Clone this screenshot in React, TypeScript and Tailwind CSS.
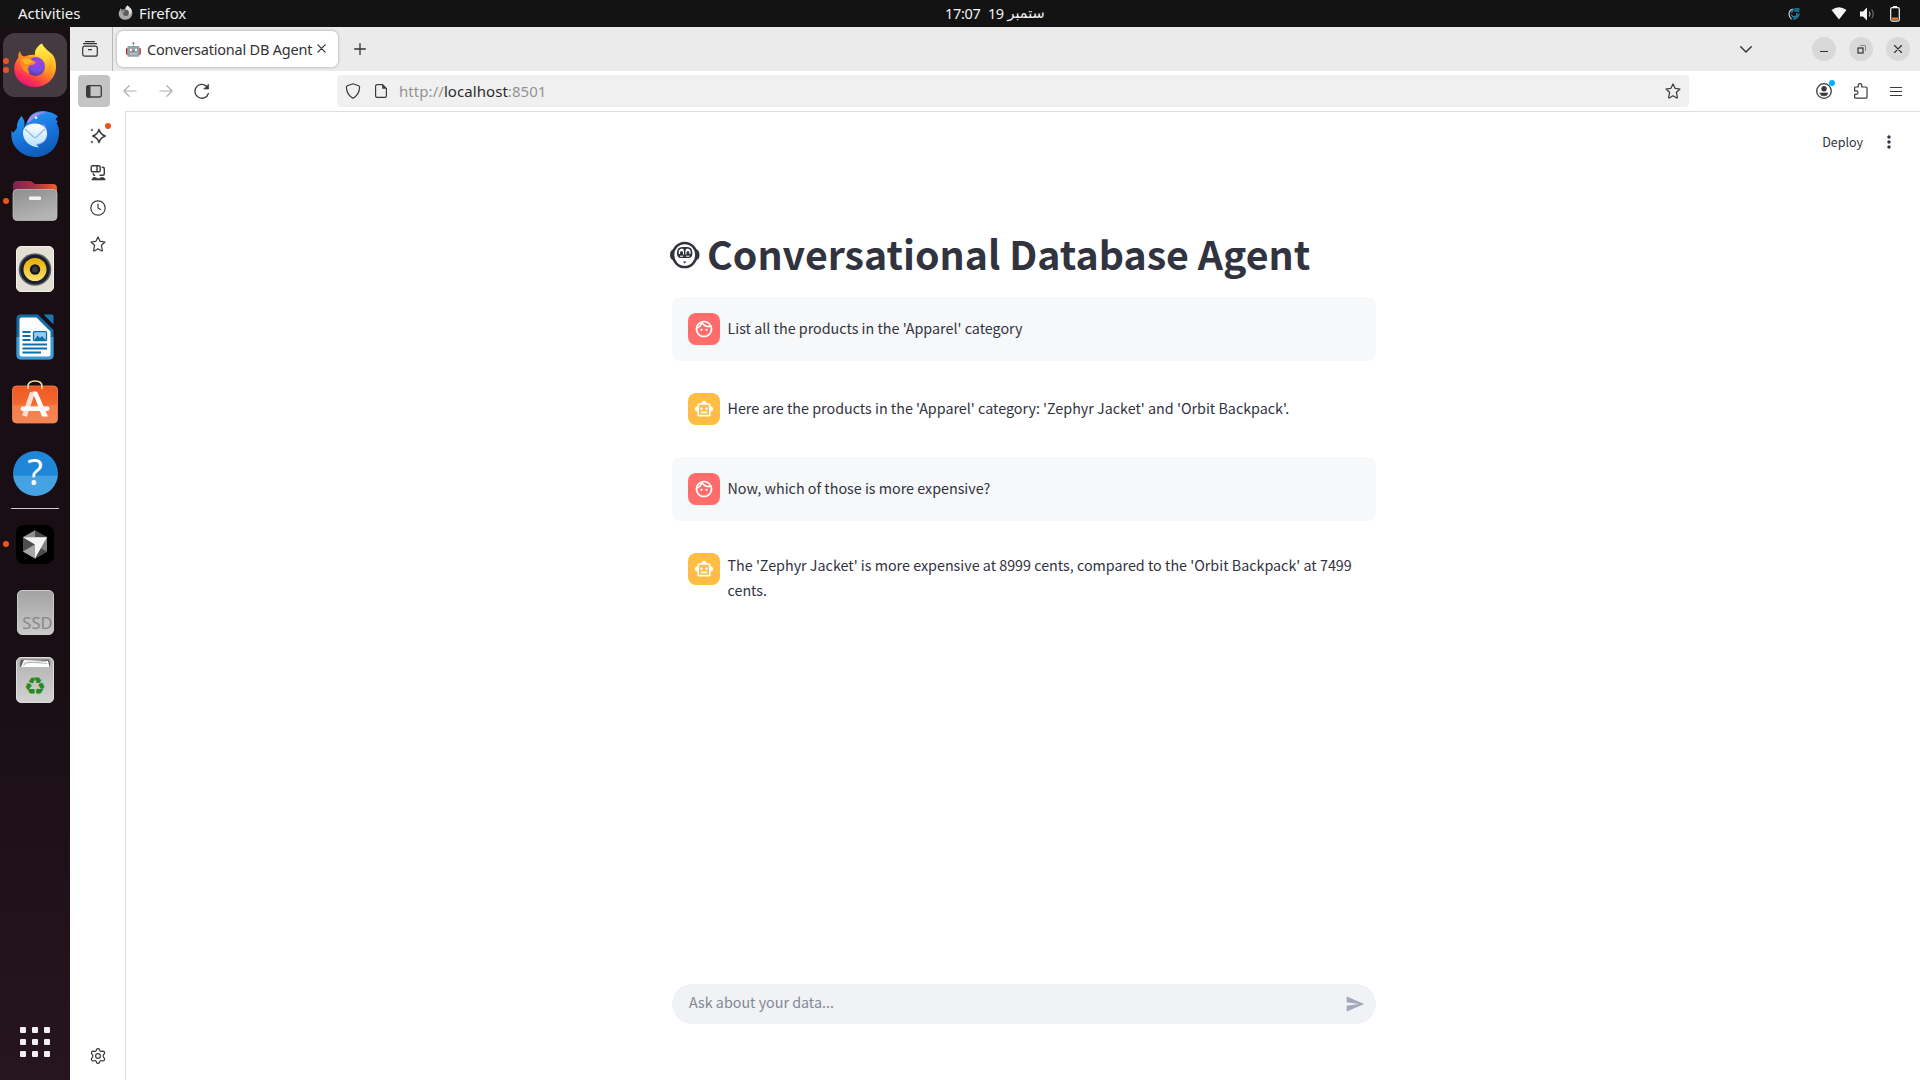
import type { ReactNode } from "react";
import { MdOutlineFace, MdOutlineSmartToy, MdSend, MdMoreVert } from "react-icons/md";

const SOURCE = "font-['Noto_Sans_CJK_SC',sans-serif]";
const messages = [
  { role: "user", text: "List all the products in the 'Apparel' category" },
  { role: "bot", text: "Here are the products in the 'Apparel' category: 'Zephyr Jacket' and 'Orbit Backpack'." },
  { role: "user", text: "Now, which of those is more expensive?" },
  {
    role: "bot",
    text: "The 'Zephyr Jacket' is more expensive at 8999 cents, compared to the 'Orbit Backpack' at 7499 cents.",
  },
];

function Line({ children, className = "", size = 16, width = 1.2 }: { children: ReactNode; className?: string; size?: number; width?: number }) {
  return (
    <svg
      className={"shrink-0 " + className}
      width={size}
      height={size}
      viewBox="0 0 16 16"
      fill="none"
      stroke="currentColor"
      strokeWidth={width}
      strokeLinecap="round"
      strokeLinejoin="round"
    >
      {children}
    </svg>
  );
}

const starPath =
  "M8 .9 L10.1 5.3 L15 6 L11.4 9.3 L12.4 14.5 Q12.4 15.2 11.7 14.9 L8 12.8 L4.3 14.9 Q3.6 15.2 3.6 14.5 L4.6 9.3 L1 6 L5.9 5.3 Z";

function FirefoxLogo() {
  return (
    <svg width="44" height="46" viewBox="0 0 44 46">
      <defs>
        <linearGradient id="ffBody" x1="0.8" y1="0.05" x2="0.25" y2="1">
          <stop offset="0" stopColor="#fff04a" />
          <stop offset="0.35" stopColor="#ffb01f" />
          <stop offset="0.6" stopColor="#ff6d2c" />
          <stop offset="0.82" stopColor="#ff2f55" />
          <stop offset="1" stopColor="#e5107c" />
        </linearGradient>
        <linearGradient id="ffTail" x1="0.4" y1="0" x2="0.6" y2="1">
          <stop offset="0" stopColor="#fff350" />
          <stop offset="0.55" stopColor="#ffcf2e" />
          <stop offset="1" stopColor="#ff8a1c" />
        </linearGradient>
        <radialGradient id="ffGlobe" cx="0.6" cy="0.3" r="0.75">
          <stop offset="0" stopColor="#a63be8" />
          <stop offset="0.6" stopColor="#7150dd" />
          <stop offset="1" stopColor="#54309c" />
        </radialGradient>
      </defs>
      <path d="M7 9 C5.500 11 5 14 5.4 15.5 C2 20 1 24 1.2 28 C2 38 11 45 22 45 C34 45 43 36 43 24.5 C43 18 41 14 39 12.5 C36 9 31 6 29 1.5 C24 6 22 9 22 13 C18 12.5 14 13.5 12 15 C9 14 7.5 12.5 7 9 Z" fill="url(#ffBody)" />
      <path d="M28.5 1.5 C22 6 21 11 22.5 14 C31 15 35 24 31 32 C39 29 42 21 39.5 12.5 C35 9 31 7 28.5 1.5 Z" fill="url(#ffTail)" />
      <circle cx="22.500" cy="24.5" r="9.500" fill="url(#ffGlobe)" />
      <path d="M7 16 C11 13 17 14 19 18 C21 20 24 18.5 22 21.5 C19 24 17 22 15.5 25 C14.5 28 16 30 17 32 C10 30 6 23 7 16 Z" fill="#ff8a22" />
      <path d="M8 17 C13 15 17 17 20 19.5 C17 21 16 23 12 22 Z" fill="#ffb325" />
    </svg>
  );
}

function ThunderbirdLogo() {
  return (
    <svg width="48" height="46" viewBox="0 0 48 46" className="mt-0.5">
      <defs>
        <linearGradient id="tbBody" x1="0.2" y1="0" x2="0.6" y2="1">
          <stop offset="0" stopColor="#2a9bf5" />
          <stop offset="0.6" stopColor="#1670d8" />
          <stop offset="1" stopColor="#0d5bb5" />
        </linearGradient>
        <linearGradient id="tbMail" x1="0" y1="0" x2="0" y2="1">
          <stop offset="0" stopColor="#ffffff" />
          <stop offset="1" stopColor="#b5e0fc" />
        </linearGradient>
      </defs>
      <path d="M10.5 5 C7 9 5.5 13 6 17 L2.500 21.500 L.5 20 C0 27 1 32 5 37 C10 43 17 46 24 46 C38 46 48 36 48 21 C48 17 47 14 45.5 12 L47 11 L44.5 8 L47 5.5 C43 2 36 -.5 29 .2 C22 1 18 5 16 11 C15 13 13 17 13 17 C14 13 14 9 10.5 5 Z" fill="url(#tbBody)" />
      <path d="M16 12 C18 6 22 2 28 1.500 C30 1 34 1 36 2 C30 2 24 5 21 9 C19 11 17 12 16 12 Z" fill="#a88af0" />
      <path d="M33 13 C37 18 37 25 35 29 C32 33 28 34 24 34 L27 36 C18 34 14 30 12 22 Z" fill="#7d8df0" />
      <path d="M12 22 C12 16 17 12.5 24 12.5 C31 12.5 36 17 36 22 C36 29 31 33 25 33 L28 36.5 C18 36 12 29 12 22 Z" fill="url(#tbMail)" />
      <path d="M14 18 L22.5 26 Q24 27 25.5 26 L34 18" fill="none" stroke="#8ebdea" strokeWidth="1.3" />
      <circle cx="25" cy="6.7" r="1.4" fill="#dff0ff" />
    </svg>
  );
}

function FilesLogo() {
  return (
    <svg width="46" height="42" viewBox="0 0 46 42">
      <defs>
        <linearGradient id="flBack" x1="0" y1="0" x2="1" y2="0">
          <stop offset="0" stopColor="#7a2350" />
          <stop offset="0.5" stopColor="#a83545" />
          <stop offset="1" stopColor="#f0612a" />
        </linearGradient>
        <linearGradient id="flFront" x1="0" y1="0" x2="0.4" y2="1">
          <stop offset="0" stopColor="#8d8d8d" />
          <stop offset="1" stopColor="#b5b5b5" />
        </linearGradient>
      </defs>
      <path d="M1 5 Q1 1 5 1 H18 Q20 1 21 2.5 Q22 4 24 4 H41 Q45 4 45 8 V20 H1 Z" fill="url(#flBack)" />
      <rect x="1" y="9.5" width="44" height="31" rx="4" fill="url(#flFront)" stroke="#c5c5c5" strokeWidth="0.7" />
      <rect x="17" y="16.5" width="12" height="3.4" rx="1.2" fill="#f4f4f4" />
    </svg>
  );
}

function RhythmboxLogo() {
  return (
    <svg width="38" height="46" viewBox="0 0 38 46">
      <defs>
        <linearGradient id="rbCone" x1="0" y1="0" x2="0" y2="1">
          <stop offset="0" stopColor="#e6ac00" />
          <stop offset="1" stopColor="#ffe273" />
        </linearGradient>
      </defs>
      <rect x="0.5" y="0.5" width="37" height="45" rx="4.5" fill="#e4dfd3" stroke="#f4f0e7" />
      <circle cx="19" cy="23.5" r="16.3" fill="#5d606b" />
      <circle cx="19" cy="23.5" r="14.8" fill="#1d1f2b" />
      <circle cx="19" cy="23.5" r="11.5" fill="url(#rbCone)" />
      <circle cx="19" cy="23.5" r="5.2" fill="#17181d" />
      <circle cx="19" cy="23.5" r="3" fill="#3a3b40" />
    </svg>
  );
}

function WriterLogo() {
  return (
    <svg width="38" height="46" viewBox="0 0 38 46">
      <path d="M4.500 .5 H22 L37.500 16 V41 Q37.500 45.500 33 45.500 H5 Q.5 45.500 .5 41 V5 Q.5 .5 4.500 .5 Z" fill="#126ca5" />
      <path d="M.5 23 H37.500 V41 Q37.500 45.500 33 45.500 H5 Q.5 45.500 .5 41 Z" fill="#3d9cd6" />
      <path d="M5.500 3.500 H20.500 L34.500 17.500 V40 Q34.500 42.500 32 42.500 H6 Q3.500 42.500 3.500 40 V5.500 Q3.500 3.500 5.500 3.500 Z" fill="#fcfcfc" />
      <path d="M27.500 .5 H36 Q37.500 .5 37.500 2 V10.500 Z" fill="#1a77b0" />
      <path d="M6.500 18 H14.500 M6.500 22 H14.500 M6.500 26 H14.500 M6.500 30.500 H31 M6.500 34.500 H31 M6.500 38.500 H25" stroke="#0c70aa" strokeWidth="2" />
      <rect x="17.500" y="17.700" width="13" height="9" rx="1" fill="#94cdf2" stroke="#0c70aa" strokeWidth="1.300" />
      <path d="M18.500 26 L21.500 21.500 L24 24 L26 22 L29.800 26 Z" fill="#0c70aa" />
    </svg>
  );
}

function SoftwareLogo() {
  return (
    <svg width="46" height="46" viewBox="0 0 46 46">
      <defs>
        <linearGradient id="swBag" x1="0" y1="0" x2="0" y2="1">
          <stop offset="0" stopColor="#f2581f" />
          <stop offset="0.5" stopColor="#f26a34" />
          <stop offset="0.51" stopColor="#f57d4a" />
          <stop offset="1" stopColor="#f58655" />
        </linearGradient>
      </defs>
      <rect x="0.500" y="8" width="45" height="37" rx="4" fill="url(#swBag)" stroke="#f8875c" strokeWidth="0.800" />
      <path d="M16 11 V8.500 Q16 3 23 3 Q30 3 30 8.500 V11" fill="none" stroke="#f5dda6" strokeWidth="1.700" />
      <path d="M20.500 14.500 L12.500 38" stroke="#fbe0d3" strokeWidth="5" />
      <path d="M20.500 13.500 H25 L36 38.500 H30 Z" fill="#fff" />
      <rect x="8.500" y="28.500" width="29" height="4.600" rx="2.300" fill="#fff" />
    </svg>
  );
}

function HelpLogo() {
  return (
    <div className="flex size-[45px] items-center justify-center rounded-full bg-linear-to-b from-[#1f87d8] from-54% to-[#45a3e4] to-56% font-['Noto_Sans',sans-serif] text-[36px] leading-none text-white">
      <span className="-mt-0.5">?</span>
    </div>
  );
}

function CursorLogo() {
  return (
    <svg width="38" height="39" viewBox="0 0 38 39">
      <rect width="38" height="39" rx="8" fill="#000" />
      <path d="M19 5.500 L31 12.300 V26.500 L19 33.500 L7 26.500 V12.300 Z" fill="#777" />
      <path d="M19 5.500 L31 12.300 H7 Z" fill="#4b4b4b" />
      <path d="M19 5.500 V12.300 H7 Z" fill="#8f8f8f" />
      <path d="M7 12.300 V26.500 L19 19.500 Z" fill="#4d4d4d" />
      <path d="M7 26.500 L19 19.500 V33.500 Z" fill="#a5a5a5" />
      <path d="M31 12.300 V26.500 L19 33.500 Z" fill="#808080" />
      <path d="M31 26.500 L24 23 L19 33.500 Z" fill="#4a4a4a" />
      <path d="M7 12.300 H31 L19 33.500 V19.500 Z" fill="#f4f4f4" />
    </svg>
  );
}

function SsdLogo() {
  return (
    <div className="flex h-[45px] w-[37px] items-end justify-end overflow-hidden rounded-[5px] border border-[#cccccc] bg-linear-to-b from-[#a3a3a3] to-[#c9c9c9] font-['Noto_Sans',sans-serif] text-[16.5px] leading-[22px] text-[#878787]">
      <span>SSD</span>
    </div>
  );
}

function TrashLogo() {
  return (
    <svg width="38" height="46" viewBox="0 0 38 46">
      <defs>
        <linearGradient id="trBody" x1="0" y1="0" x2="0" y2="1">
          <stop offset="0" stopColor="#b2b2b2" />
          <stop offset="1" stopColor="#d2d2d2" />
        </linearGradient>
      </defs>
      <rect x="0.500" y="0.500" width="37" height="45" rx="4.500" fill="url(#trBody)" stroke="#dedede" />
      <path d="M5 2.500 H33 Q35 6 34 10 H4 Q3 6 5 2.500 Z" fill="#666" />
      <path d="M5 10 L8 3 L32 4 L33.500 10 Z" fill="#fff" />
      <path d="M8 6 L30 4.500 M7 8.500 L12 5 L31 6.500" stroke="#aaa" strokeWidth="0.800" fill="none" />
      <text x="19" y="38" textAnchor="middle" fontSize="25" fontFamily="DejaVu Sans" fill="#268a1c">
        {"\u267B\uFE0E"}
      </text>
    </svg>
  );
}

function DockItem({ children, active = false, dots = 0 }: { children: ReactNode; active?: boolean; dots?: number }) {
  return (
    <div className="relative flex h-16 w-full items-center justify-center">
      {active && <div className="absolute inset-x-[3px] inset-y-0 rounded-xl bg-[#463a41]" />}
      <div className="relative">{children}</div>
      <div className="absolute left-[3px] flex flex-col gap-[3px]">
        {Array.from({ length: dots }, (_, i) => (
          <div key={i} className="size-1.5 rounded-full bg-[#e95420]" />
        ))}
      </div>
    </div>
  );
}

function Dock() {
  return (
    <aside className="flex w-[70px] shrink-0 flex-col items-center gap-1 bg-linear-to-b from-[#190e14] from-60% to-[#26151f] pt-1.5">
      <DockItem active dots={2}><FirefoxLogo /></DockItem>
      <DockItem><ThunderbirdLogo /></DockItem>
      <DockItem dots={1}><FilesLogo /></DockItem>
      <DockItem><RhythmboxLogo /></DockItem>
      <DockItem><WriterLogo /></DockItem>
      <DockItem><div className="-mt-2"><SoftwareLogo /></div></DockItem>
      <DockItem><HelpLogo /></DockItem>
      <div className="-mt-px h-px w-12 shrink-0 bg-[#cfcbcd]" />
      <div className="-mt-px flex w-full flex-col gap-1">
        <DockItem dots={1}><CursorLogo /></DockItem>
        <DockItem><SsdLogo /></DockItem>
        <DockItem><TrashLogo /></DockItem>
      </div>
      <div className="mt-auto mb-[23px] grid grid-cols-3 gap-1.5">
        {Array.from({ length: 9 }, (_, i) => (
          <div key={i} className="size-1.5 rounded-[1px] bg-[#f2f0f0]" />
        ))}
      </div>
    </aside>
  );
}

function TopBar() {
  return (
    <header className="flex h-[27px] shrink-0 items-center bg-[#131313] text-[15px] leading-[27px] text-[#f2f2f2]">
      <div className="flex w-[930px] items-center pl-[18px]">
        <span className="w-[100px]">Activities</span>
        <svg width="15" height="15" viewBox="0 0 44 46" className="mb-0.5">
          <path d="M6 10 L5.400 15.500 C2 20 1 24 1.200 28 C2 38 11 45 22 45 C34 45 43 36 43 24.500 C43 18 41 14 39 12.500 C36 9 31 6 29 1.500 C24 6 22 9 22 13 C18 12.500 14 13.500 12 15 Z" fill="#a9a9a9" />
          <path d="M28.500 1.500 C22 6 21 11 22.500 14 C31 15 35 24 31 32 C39 29 42 21 39.500 12.500 Z" fill="#e3e3e3" />
          <circle cx="23" cy="24" r="9.500" fill="#5b5b5b" />
          <path d="M7 16 C12 13 17 16 22 20 C18 23 16 23 14 28 Z" fill="#8b8b8b" />
        </svg>
        <span className="ml-1.5 tracking-[-0.1px]">Firefox</span>
      </div>
      <div className="flex flex-1 items-center pl-[15px]">
        <span className="w-[43px] text-[14.5px] tracking-[-0.3px]">17:07</span>
        <span className="text-[14.5px] tracking-[-0.6px]">19</span>
        <span className="ml-1 font-['DejaVu_Sans',sans-serif] text-[14.5px]" dir="rtl">ستمبر</span>
      </div>
      <svg width="12" height="12" viewBox="0 0 12 12" className="mr-[31px]" fill="none">
        <path d="M4.800 1 Q1.200 2.200 1 6 Q1.200 9.500 3.600 11.200" stroke="#c4ccd0" strokeWidth="1.300" />
        <path d="M11.500 1.200 Q7 .2 4.800 2.200 Q3.600 3.500 3.900 5 M11.300 3.500 Q8.500 2.200 6.500 3.300 M11 5.500 Q10.800 9.800 5 11.300 M3.500 6.500 Q4 9.500 7.500 8.600 Q9.500 7.500 8.700 5" stroke="#2180a6" strokeWidth="1.500" />
      </svg>
      <svg width="16" height="13" viewBox="0 0 16 13" className="mr-[13px]">
        <path d="M.5 3 Q8 -2.600 15.500 3 L8 12.500 Z" fill="#f5f5f5" />
      </svg>
      <svg width="15" height="14" viewBox="0 0 15 14" className="mr-4" fill="none">
        <path d="M0 4.500 H3 L7 .5 V13.500 L3 9.500 H0 Z" fill="#f5f5f5" />
        <path d="M9.300 4.500 Q10.800 7 9.300 9.500" stroke="#b5b5b5" strokeWidth="1.200" />
        <path d="M11.600 2.500 Q14.800 7 11.600 11.500" stroke="#6f6f6f" strokeWidth="1.200" />
      </svg>
      <svg width="10" height="16" viewBox="0 0 10 16" className="mr-5 -ml-px">
        <rect x="3" y="0" width="4" height="2" fill="#f5f5f5" />
        <rect x="0.700" y="1.700" width="8.600" height="13.400" rx="1.500" fill="none" stroke="#f5f5f5" strokeWidth="1.200" />
        <rect x="2" y="11.500" width="6" height="2.300" fill="#f57936" />
      </svg>
    </header>
  );
}

function WindowButton({ children }: { children: ReactNode }) {
  return <div className="flex size-6 items-center justify-center rounded-full bg-[#d9d9d9]">{children}</div>;
}

function TabStrip() {
  return (
    <div className="flex h-11 shrink-0 items-center bg-[#ebebeb] text-[#333]">
      <div className="flex h-full w-[43px] items-center justify-center border-r border-[#b7b7b7] pr-0.5">
        <Line>
          <rect x="0.700" y="5.200" width="14.600" height="10" rx="2" />
          <path d="M1.500 2.700 H14.500 M3.500 .6 H12.500 M6.500 8.700 H9.500" />
        </Line>
      </div>
      <div className="ml-1 flex h-9 w-[221px] items-center rounded-md bg-white pl-2 shadow-[0_0_3px_rgba(0,0,0,0.35)]">
        <span className="w-[22px] font-['Noto_Color_Emoji'] text-[13.5px] leading-4">🤖</span>
        <span className="w-[170px] whitespace-nowrap text-[14.5px] leading-5 tracking-[-0.22px] text-[#333]">Conversational DB Agent</span>
        <Line size={9} width={2.2} className="-mt-px"><path d="M1.500 1.500 L14.500 14.500 M14.500 1.500 L1.500 14.500" /></Line>
      </div>
      <Line size={12} width={1.7} className="ml-4"><path d="M8 .8 V15.200 M.8 8 H15.200" /></Line>
      <div className="ml-auto flex items-center pr-2.5">
        <Line size={12} width={1.9} className="mr-[60px]"><path d="M1 5 L8 12 L15 5" /></Line>
        <div className="flex gap-[13px]">
          <WindowButton><div className="mt-[5px] h-px w-2 bg-[#333]" /></WindowButton>
          <WindowButton>
            <svg width="9" height="9" viewBox="0 0 9 9" fill="none">
              <path d="M3 .5 H8.500 V6" stroke="#8a8a8a" />
              <rect x="1" y="3" width="5" height="5" stroke="#333" strokeWidth="1.200" />
            </svg>
          </WindowButton>
          <WindowButton><Line size={8} width={2.4}><path d="M1 1 L15 15 M15 1 L1 15" /></Line></WindowButton>
        </div>
      </div>
    </div>
  );
}

function Toolbar() {
  return (
    <div className="flex h-10 shrink-0 items-center pl-2 text-[#3a3a3a]">
      <div className="flex size-8 items-center justify-center rounded bg-[#c4c4c4]">
        <svg width="16" height="13" viewBox="0 0 16 13">
          <rect x="0.700" y="0.700" width="14.600" height="11.300" rx="1.800" fill="none" stroke="#3a3a3a" strokeWidth="1.300" />
          <rect x="0.500" y="0.500" width="4" height="12" rx="1" fill="#3a3a3a" />
        </svg>
      </div>
      <Line size={14} width={1.4} className="ml-[13px] text-[#b0b0b0]"><path d="M15 8 H1 M7 2 L1 8 L7 14" /></Line>
      <Line size={14} width={1.4} className="ml-[22px] text-[#b0b0b0]"><path d="M1 8 H15 M9 2 L15 8 L9 14" /></Line>
      <Line width={1.300} className="ml-[21px]">
        <path d="M14.400 10.500 A6.900 6.900 0 1 1 12.500 3.200" />
        <path d="M14.600 1.300 V6 H9.900 Z" fill="currentColor" strokeWidth="0.600" />
      </Line>
      <div className="ml-[127px] flex h-8 w-[1352px] items-center rounded bg-[#f0f0f0] px-2">
        <Line><path d="M8 .8 L13.600 2.800 Q14.600 3.200 14.600 4.300 Q14.500 11.500 8 15.300 Q1.500 11.500 1.400 4.300 Q1.400 3.200 2.400 2.800 Z" /></Line>
        <svg width="12" height="14" viewBox="0 0 12 14" className="ml-3.5">
          <path d="M2.200 .6 H7.500 L11.400 4.500 V12 Q11.400 13.400 10 13.400 H2 Q.6 13.400 .6 12 V2.200 Q.6 .6 2.200 .6 Z" fill="none" stroke="#3a3a3a" strokeWidth="1.200" />
          <path d="M7.200 .6 L11.400 4.800 H7.200 Z" fill="#3a3a3a" />
        </svg>
        <span className="ml-3 text-[15px] leading-5 tracking-[0.06px] text-[#949494]">
          http://<span className="text-[#2c2c2c]">localhost</span>:8501
        </span>
        <Line className="ml-auto"><path d={starPath} /></Line>
      </div>
      <div className="ml-auto flex items-center pr-[18px]">
        <div className="relative">
          <Line width={1.300}>
            <circle cx="8" cy="8" r="7.300" />
            <circle cx="8" cy="5.800" r="2.100" fill="currentColor" />
            <path d="M4 10 H12 L10.500 12.400 Q8 13.300 5.500 12.400 Z" fill="currentColor" strokeWidth="0.600" />
          </Line>
          <div className="absolute -top-[3px] -right-[3px] size-1.5 rounded-full bg-[#00adff]" />
        </div>
        <Line className="ml-[21px]">
          <path d="M1.600 6 V4.800 Q1.600 4 2.400 4 H5.200 V2.400 Q5.200 .7 7 .7 Q8.800 .7 8.800 2.400 V4 H13 Q14 4 14 5 V14.200 Q14 15.200 13 15.200 H2.600 Q1.600 15.200 1.600 14.200 V11.400 H3.400 Q5 11.400 5 9.600 Q5 7.800 3.400 7.800 H1.600 Z" />
        </Line>
        <div className="ml-[21px] flex w-3 flex-col gap-[3px]">
          <div className="h-px bg-[#3a3a3a]" />
          <div className="h-px bg-[#3a3a3a]" />
          <div className="h-px bg-[#3a3a3a]" />
        </div>
      </div>
    </div>
  );
}

function SideRail() {
  return (
    <div className="flex w-[55px] shrink-0 flex-col items-center gap-5 pt-[17px] text-[#3a3a3a]">
      <div className="relative">
        <Line width={1.500}>
          <path d="M9 1.500 Q10.200 6.300 15.300 8 Q10.200 9.700 9 14.500 Q7.800 9.700 2.700 8 Q7.800 6.300 9 1.500 Z" />
          <circle cx="1.900" cy="2" r="1.300" fill="#777" stroke="none" />
          <circle cx="1.900" cy="14" r="1.300" fill="#777" stroke="none" />
        </Line>
        <div className="absolute -top-[5px] -right-[5px] size-1.5 rounded-full bg-[#f04f1c]" />
      </div>
      <Line width={1.400} className="translate-y-px">
        <rect x="1.200" y=".8" width="9" height="6" rx="1.300" />
        <path d="M7 1 V6.500 M3.200 8.800 Q3.200 10.300 4.700 10.300 M12.300 2.300 Q14.300 2.300 14.300 4 V8.500 Q14.300 10.300 12.500 10.300 H10" />
        <path d="M4 12.600 H6 L7 13.400 H9.500 L10.500 12.600 H13.500 Q15 13 15.200 15 H1.800 Q2 13 4 12.600 Z" fill="currentColor" strokeWidth="0.600" />
      </Line>
      <Line><circle cx="8" cy="8" r="7.200" /><path d="M8 4 V8 L10.500 9.500" /></Line>
      <Line><path d={starPath} /></Line>
      <Line className="mt-auto mb-4">
        <path d="M6.700 1.200 Q8 0 9.300 1.200 L10 3 Q10.400 3.500 11.200 3.400 L13.200 3.200 Q15 3.600 14.500 5.400 L13.300 7.200 Q13 8 13.300 8.800 L14.500 10.600 Q15 12.400 13.200 12.800 L11.200 12.600 Q10.400 12.500 10 13 L9.300 14.800 Q8 16 6.700 14.800 L6 13 Q5.600 12.500 4.800 12.600 L2.800 12.800 Q1 12.400 1.500 10.600 L2.700 8.800 Q3 8 2.700 7.200 L1.500 5.400 Q1 3.600 2.800 3.200 L4.800 3.400 Q5.600 3.500 6 3 Z" />
        <circle cx="8" cy="8" r="2.400" />
      </Line>
    </div>
  );
}

function RobotHead() {
  return (
    <svg width="30" height="28" viewBox="0 0 30 28" className="mt-[3px] -ml-0.5 shrink-0" fill="none" stroke="#31333f">
      <path d="M4 8 Q0 9 0 14 Q0 18.500 4 19.500 Z M25.500 8 Q29.500 9 29.500 14 Q29.500 18.500 25.500 19.500 Z" fill="#31333f" stroke="none" />
      <ellipse cx="14.700" cy="14" rx="11.700" ry="12.100" strokeWidth="2.500" />
      <path d="M7 13 Q6.600 6 12 6 H17.500 Q22.700 6 22.400 13 Q22 17 18.800 17 H10.500 Q7.400 17 7 13 Z" fill="#31333f" stroke="none" />
      <path d="M8.800 12 V10 Q9.500 7.700 12 7.500 Q13.900 7.700 14 10 V13.500 H13 V11.500 Q12.700 10 11.500 10 Q10.200 10 10 11.500 V13 H8.800 Z M20.600 12 V10 Q19.900 7.700 17.400 7.500 Q15.500 7.700 15.400 10 V13.500 H16.400 V11.500 Q16.700 10 17.900 10 Q19.200 10 19.400 11.500 V13 H20.600 Z" fill="#fff" stroke="none" />
      <path d="M10 15.200 H13.200 M16.200 15.200 H19.400" stroke="#fff" strokeWidth="1" />
      <path d="M13 20.500 H16.400 L14.700 22.400 Z" fill="#31333f" stroke="none" />
    </svg>
  );
}

function Message({ role, text }: { role: string; text: string }) {
  const user = role === "user";
  return (
    <div className={"flex gap-[7.5px] rounded-lg p-4 " + (user ? "bg-[#f7f8fa]" : "")}>
      <div className={"flex size-8 shrink-0 items-center justify-center rounded-lg text-white " + (user ? "bg-[#ff6c6c]" : "bg-[#ffbd45]")}>
        {user ? <MdOutlineFace size={20} /> : <MdOutlineSmartToy size={20} />}
      </div>
      <p className={"text-[14.32px] leading-[25px] " + (text.length > 90 ? "-mt-px -mb-[17px]" : "mt-0.5")}>{text}</p>
    </div>
  );
}

export default function App() {
  return (
    <div className="flex h-[1080px] w-[1920px] flex-col overflow-hidden bg-white font-['Noto_Sans',sans-serif]">
      <TopBar />
      <div className="flex min-h-0 flex-1">
        <Dock />
        <div className="flex min-w-0 flex-1 flex-col">
          <TabStrip />
          <Toolbar />
          <div className="flex min-h-0 flex-1">
            <SideRail />
            <main className={"flex flex-1 flex-col border-t border-l border-[#dedede] text-[#31333f] " + SOURCE}>
              <div className="flex h-[60px] shrink-0 items-center justify-end pr-[21px]">
                <span className="text-[12.5px] leading-5">Deploy</span>
                <MdMoreVert size={20} className="ml-4" />
              </div>
              <div className="ml-[546px] flex min-h-0 w-[704px] flex-1 flex-col">
                <h1 className="mt-[55px] flex h-[52px] items-center whitespace-nowrap text-[39.3px] leading-[52px] font-bold">
                  <RobotHead />
                  <span className="-mt-px ml-[7px]">Conversational Database Agent</span>
                </h1>
                <div className="mt-[18px] flex flex-col gap-4">
                  {messages.map((m) => (
                    <Message key={m.text} role={m.role} text={m.text} />
                  ))}
                </div>
                <div className="mt-auto mb-14 flex h-10 items-center justify-between rounded-full bg-[#f0f2f6] pr-[11px] pl-[17px]">
                  <span className="-mt-1 text-[14.3px] leading-6 text-[#858792]">Ask about your data...</span>
                  <MdSend size={20} className="text-[#a3a8b8]" />
                </div>
              </div>
            </main>
          </div>
        </div>
      </div>
    </div>
  );
}
